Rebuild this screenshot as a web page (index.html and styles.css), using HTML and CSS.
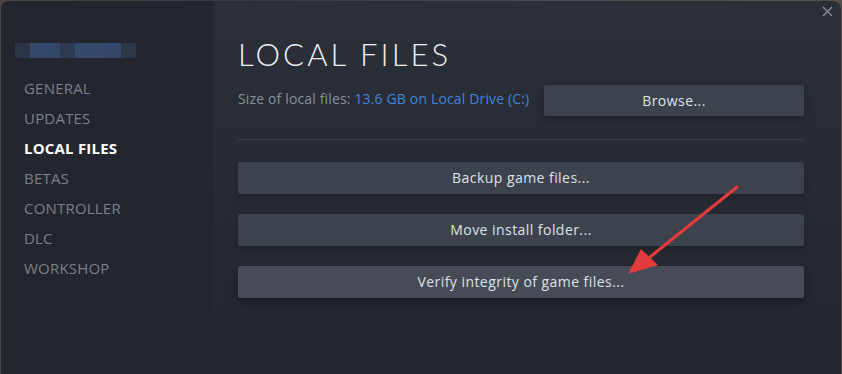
FILE: index.html
```html
<!DOCTYPE html>
<html>
<head>
<meta charset="utf-8">
<link rel="stylesheet" href="styles.css">
</head>
<body>
<div class="window">
  <aside class="sidebar">
    <div class="logo">
      <span class="b1"></span><span class="b2"></span><span class="b3"></span><span class="b4"></span><span class="b5"></span><span class="b6"></span><span class="b7"></span>
    </div>
    <nav class="nav">
      <div class="nav-item">GENERAL</div>
      <div class="nav-item">UPDATES</div>
      <div class="nav-item active">LOCAL FILES</div>
      <div class="nav-item">BETAS</div>
      <div class="nav-item">CONTROLLER</div>
      <div class="nav-item">DLC</div>
      <div class="nav-item">WORKSHOP</div>
    </nav>
  </aside>
  <main class="content">
    <button class="close" aria-label="Close">
      <svg width="11" height="11" viewBox="0 0 11 11"><path d="M1 1L10 10M10 1L1 10" stroke="#8e9199" stroke-width="1.3"/></svg>
    </button>
    <h1 class="title">LOCAL FILES</h1>
    <div class="size-row">
      <div class="size-text">Size of local files: <span class="link">13.6 GB on Local Drive (C:)</span></div>
      <div class="btn browse">Browse...</div>
    </div>
    <div class="sep"></div>
    <div class="actions">
      <div class="btn wide">Backup game files...</div>
      <div class="btn wide">Move install folder...</div>
      <div class="btn wide verify">Verify integrity of game files...</div>
    </div>
    <svg class="arrow" width="140" height="110" viewBox="0 0 140 110">
      <line x1="127" y1="6" x2="40" y2="76" stroke="#e23b3b" stroke-width="3.2" stroke-linecap="round"/>
      <polygon points="18,93 31,68 48,84" fill="#e23b3b"/>
    </svg>
  </main>
</div>
</body>
</html>
```

FILE: styles.css
```css
html, body {
  margin: 0;
  padding: 0;
}
body {
  width: 842px;
  height: 374px;
  overflow: hidden;
  background: linear-gradient(90deg, #4a4540 0%, #3b3a3a 30%, #4d4a4a 60%, #55504a 100%);
  font-family: "Open Sans", "Liberation Sans", sans-serif;
}
.window {
  margin: 1px 1px 0 1px;
  height: 373px;
  display: flex;
  border-radius: 8px 8px 0 0;
  overflow: hidden;
  box-shadow: inset -1px 0 0 #4a4e57;
}
.sidebar {
  width: 212px;
  flex: none;
  background: #23262e;
  padding-top: 42px;
  box-sizing: border-box;
}
.logo {
  margin-left: 14px;
  display: flex;
  height: 15px;
  width: 121px;
}
.logo span { height: 100%; display: block; }
.logo .b1 { width: 15px; background: #2a3444; }
.logo .b2 { width: 15px; background: #34496a; }
.logo .b3 { width: 15px; background: #33476a; }
.logo .b4 { width: 15px; background: #2c3a52; }
.logo .b5 { width: 30px; background: #35496b; }
.logo .b6 { width: 16px; background: #34476a; }
.logo .b7 { width: 15px; background: #2b3648; }
.nav {
  margin-top: 15px;
}
.nav-item {
  height: 30px;
  line-height: 30px;
  padding-left: 23px;
  font-size: 15px;
  color: #7d8089;
  letter-spacing: 0.2px;
}
.nav-item.active {
  color: #ffffff;
  font-weight: 700;
}
.content {
  flex: 1;
  position: relative;
  background: linear-gradient(180deg, #2b2f38 0%, #262a32 60%, #23262e 100%);
  padding: 33px 37px 0 25px;
  box-sizing: border-box;
}
.close {
  position: absolute;
  right: 8px;
  top: 5px;
  background: none;
  border: 0;
  padding: 0;
  width: 11px;
  height: 11px;
  display: flex;
}
.title {
  margin: 0;
  font-family: "Lato", "Open Sans", sans-serif;
  font-weight: 300;
  font-size: 31px;
  letter-spacing: 3.1px;
  color: #eeeff1;
  line-height: 40px;
}
.size-row {
  margin-top: 11px;
  display: flex;
  align-items: center;
  justify-content: space-between;
}
.size-text {
  font-size: 14px;
  letter-spacing: 0.15px;
  color: #8a9099;
  margin-top: -5px;
}
.link {
  color: #3f86d9;
}
.btn {
  background: #3d434d;
  color: #dfe2e6;
  font-size: 14px;
  letter-spacing: 0.45px;
  height: 31px;
  line-height: 31px;
  text-align: center;
  border-radius: 2px;
  box-shadow: 0 3px 8px rgba(0,0,0,0.25);
}
.browse {
  width: 260px;
}
.sep {
  margin-top: 23px;
  height: 1px;
  background: #393e47;
}
.actions {
  margin-top: 22px;
  display: flex;
  flex-direction: column;
  gap: 20px;
}
.wide {
  height: 32px;
  line-height: 32px;
}
.verify {
  background: #464b56;
  box-shadow: 0 4px 10px rgba(0,0,0,0.35);
}
.arrow {
  position: absolute;
  left: 397px;
  top: 180px;
}
```
